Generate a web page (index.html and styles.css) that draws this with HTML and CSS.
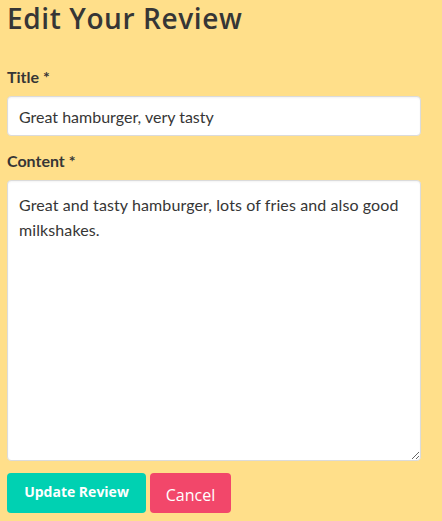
FILE: index.html
```html
<!DOCTYPE html>
<html>
<head>
<meta charset="utf-8">
<link rel="stylesheet" href="styles.css">
</head>
<body>
<main class="page">
  <h1 class="title">Edit Your Review</h1>
  <form class="form">
    <div class="field">
      <label class="label">Title *</label>
      <input class="input" type="text" value="Great hamburger, very tasty">
    </div>
    <div class="field field-content">
      <label class="label">Content *</label>
      <textarea class="textarea">Great and tasty hamburger, lots of fries and also good milkshakes.</textarea>
    </div>
    <div class="actions">
      <button type="button" class="btn btn-primary">Update Review</button>
      <a class="btn btn-danger">Cancel</a>
    </div>
  </form>
</main>
</body>
</html>
```

FILE: styles.css
```css
html, body {
  margin: 0;
  padding: 0;
  background: #ffdf8a;
}
.page {
  padding: 0 21px 0 7px;
  font-family: Lato, "Open Sans", sans-serif;
  color: #363636;
}
.title {
  margin: 0;
  font-family: "Open Sans", sans-serif;
  font-weight: 600;
  font-size: 28px;
  line-height: 36px;
  letter-spacing: 0.6px;
  color: #363636;
}
.form {
  display: flex;
  flex-direction: column;
  margin-top: 29px;
}
.field {
  display: flex;
  flex-direction: column;
}
.field-content {
  margin-top: 13px;
}
.label {
  font-family: Lato, sans-serif;
  font-weight: 700;
  font-size: 16px;
  line-height: 24px;
  margin-bottom: 7px;
  color: #363636;
}
.input, .textarea {
  box-sizing: border-box;
  width: 100%;
  border: 1px solid #dbdbdb;
  border-radius: 4px;
  background: #fff;
  font-family: Lato, sans-serif;
  font-size: 16px;
  color: #363636;
  padding: 0 11px;
  margin: 0;
  box-shadow: inset 0 1px 2px rgba(10,10,10,0.05);
}
.input {
  height: 40px;
  line-height: 24px;
}
.textarea {
  height: 281px;
  padding: 11px;
  line-height: 25px;
  letter-spacing: 0.1px;
  resize: vertical;
}
.actions {
  display: flex;
  gap: 4px;
  margin-top: 12px;
}
.btn {
  box-sizing: border-box;
  height: 40px;
  border: none;
  border-radius: 4px;
  color: #fff;
  display: flex;
  align-items: center;
  justify-content: center;
  font-family: "Open Sans", sans-serif;
}
.btn-primary {
  width: 139px;
  background: #00d1b2;
  font-weight: 700;
  font-size: 14px;
  padding-bottom: 4px;
}
.btn-danger {
  width: 81px;
  background: #f2476a;
  font-weight: 400;
  font-size: 16px;
  padding-top: 3px;
}
```
